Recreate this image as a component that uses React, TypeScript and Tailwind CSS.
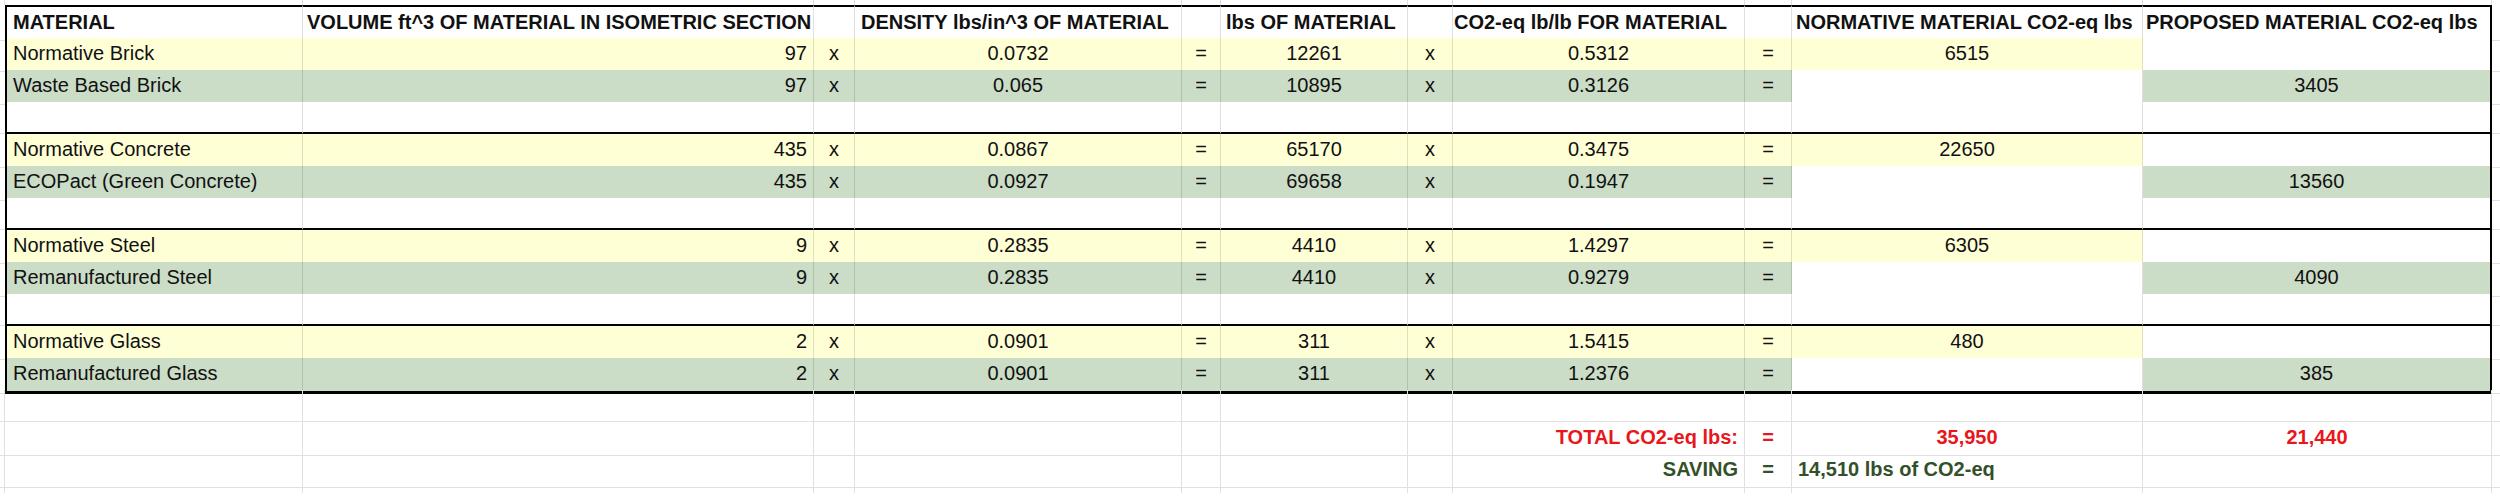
import React from 'react';

// column template shared by every sheet row (partial edge columns at both sides)
const GRID =
    'grid grid-cols-[5px_298px_511px_41px_327px_39px_187px_45px_292px_47px_351px_349px_8px]';

const YELLOW = 'bg-[#ffffd6]';
const GREEN = 'bg-[#cbdcc7]';
const WHITE = 'bg-white';

const BOTTOM = {
    header: 'border-b border-b-[#2a2a2a]',
    thin: 'border-b border-b-black/[0.12]',
    thick: 'border-b-2 border-b-black',
    heavy: 'border-b-[3px] border-b-black',
    grid: 'border-b border-b-[#e0e0e0]',
    none: '',
};

type Bottom = keyof typeof BOTTOM;

const DATA_ALIGN = [
    'justify-start pl-[6px]',
    'justify-end pr-[6px]',
    'justify-center',
    'justify-center',
    'justify-center',
    'justify-center',
    'justify-center',
    'justify-center',
    'justify-center',
    'justify-center',
    'justify-center',
];

const HEADER_PAD = [
    'pl-[6px]',
    'pl-[4px]',
    '',
    'pl-[6px]',
    '',
    'pl-[5px]',
    '',
    'pl-[1px]',
    '',
    'pl-[4px]',
    'pl-[3px]',
];

interface Group {
    normative: string[];
    proposed: string[];
}

const groups: Group[] = [
    {
        normative: ['Normative Brick', '97', '0.0732', '12261', '0.5312', '6515'],
        proposed: ['Waste Based Brick', '97', '0.065', '10895', '0.3126', '3405'],
    },
    {
        normative: ['Normative Concrete', '435', '0.0867', '65170', '0.3475', '22650'],
        proposed: ['ECOPact (Green Concrete)', '435', '0.0927', '69658', '0.1947', '13560'],
    },
    {
        normative: ['Normative Steel', '9', '0.2835', '4410', '1.4297', '6305'],
        proposed: ['Remanufactured Steel', '9', '0.2835', '4410', '0.9279', '4090'],
    },
    {
        normative: ['Normative Glass', '2', '0.0901', '311', '1.5415', '480'],
        proposed: ['Remanufactured Glass', '2', '0.0901', '311', '1.2376', '385'],
    },
];

function Edge({ bottom = 'grid', right = false }: { bottom?: Bottom; right?: boolean }) {
    return <div className={`${BOTTOM[bottom]} ${right ? 'border-r border-r-[#e0e0e0]' : ''}`} />;
}

interface CellProps {
    col: number;
    bg: string;
    bottom: Bottom;
    top?: boolean;
    className?: string;
    children?: React.ReactNode;
}

// a cell inside the bordered table: outer border on col 0 / col 10
function Cell({ col, bg, bottom, top, className = '', children }: CellProps) {
    const right = col === 10 ? 'border-r-2 border-r-black' : 'border-r border-r-black/[0.12]';
    const left = col === 0 ? 'border-l-2 border-l-black' : '';
    return (
        <div
            className={`flex items-end pb-[3px] whitespace-nowrap ${bg} ${right} ${left} ${BOTTOM[bottom]} ${
                top ? 'border-t-2 border-t-black' : ''
            } ${className}`}
        >
            {children}
        </div>
    );
}

function HeaderRow() {
    const labels = [
        'MATERIAL',
        'VOLUME ft^3 OF MATERIAL IN ISOMETRIC SECTION',
        '',
        'DENSITY lbs/in^3 OF MATERIAL',
        '',
        'lbs OF MATERIAL',
        '',
        'CO2-eq lb/lb FOR MATERIAL',
        '',
        'NORMATIVE MATERIAL CO2-eq lbs',
        'PROPOSED MATERIAL CO2-eq lbs',
    ];
    return (
        <div className={`${GRID} h-[33px]`}>
            <Edge />
            {labels.map((l, i) => (
                <Cell key={i} col={i} bg={WHITE} bottom="header" top className={`font-bold ${HEADER_PAD[i]}`}>
                    {l}
                </Cell>
            ))}
            <Edge />
        </div>
    );
}

function MaterialRow({ values, kind, bottom }: { values: string[]; kind: 'n' | 'p'; bottom: Bottom }) {
    const [name, vol, dens, lbs, co2, total] = values;
    const cells = [name, vol, 'x', dens, '=', lbs, 'x', co2, '=', kind === 'n' ? total : '', kind === 'p' ? total : ''];
    const bgFor = (i: number) => {
        if (kind === 'n') return i === 10 ? WHITE : YELLOW;
        return i === 9 ? WHITE : GREEN;
    };
    return (
        <div className={`${GRID} h-[32px]`}>
            <Edge />
            {cells.map((c, i) => (
                <Cell key={i} col={i} bg={bgFor(i)} bottom={bottom} className={DATA_ALIGN[i]}>
                    {c}
                </Cell>
            ))}
            <Edge />
        </div>
    );
}

function BlankRow() {
    return (
        <div className={`${GRID} h-[32px]`}>
            <Edge />
            {Array.from({ length: 11 }).map((_, i) => (
                <Cell key={i} col={i} bg={WHITE} bottom="thick" />
            ))}
            <Edge />
        </div>
    );
}

// plain spreadsheet row below the table, light gridlines only
function SheetRow({
    cells = {},
    h = 'h-[32px]',
    bottom = 'grid',
}: {
    cells?: Record<number, React.ReactNode>;
    h?: string;
    bottom?: Bottom;
}) {
    return (
        <div className={`${GRID} ${h}`}>
            <Edge bottom={bottom} right />
            {Array.from({ length: 11 }).map((_, i) => (
                <div
                    key={i}
                    className={`flex items-end pb-[3px] whitespace-nowrap border-r border-r-[#e0e0e0] ${BOTTOM[bottom]}`}
                >
                    {cells[i]}
                </div>
            ))}
            <Edge bottom={bottom} />
        </div>
    );
}

export default function App() {
    const red = 'text-[#e8171c] font-bold';
    const green = 'text-[#33502a] font-bold';
    return (
        <div className="w-[2500px] h-[500px] overflow-hidden bg-white text-[20px] text-[#111] font-['Liberation_Sans',Arial,sans-serif]">
            <SheetRow h="h-[5px]" bottom="none" />
            <HeaderRow />
            {groups.map((g, gi) => (
                <React.Fragment key={gi}>
                    <MaterialRow values={g.normative} kind="n" bottom="thin" />
                    <MaterialRow values={g.proposed} kind="p" bottom={gi === groups.length - 1 ? 'heavy' : 'thick'} />
                    {gi < groups.length - 1 && <BlankRow />}
                </React.Fragment>
            ))}
            <SheetRow />
            <SheetRow
                cells={{
                    7: <span className={`w-full text-right pr-[6px] ${red}`}>TOTAL CO2-eq lbs:</span>,
                    8: <span className={`w-full text-center ${red}`}>=</span>,
                    9: <span className={`w-full text-center ${red}`}>35,950</span>,
                    10: <span className={`w-full text-center ${red}`}>21,440</span>,
                }}
            />
            <SheetRow
                cells={{
                    7: <span className={`w-full text-right pr-[6px] ${green}`}>SAVING</span>,
                    8: <span className={`w-full text-center ${green}`}>=</span>,
                    9: <span className={`w-full pl-[6px] ${green}`}>14,510 lbs of CO2-eq</span>,
                }}
            />
            <SheetRow h="h-[7px]" bottom="none" />
        </div>
    );
}
